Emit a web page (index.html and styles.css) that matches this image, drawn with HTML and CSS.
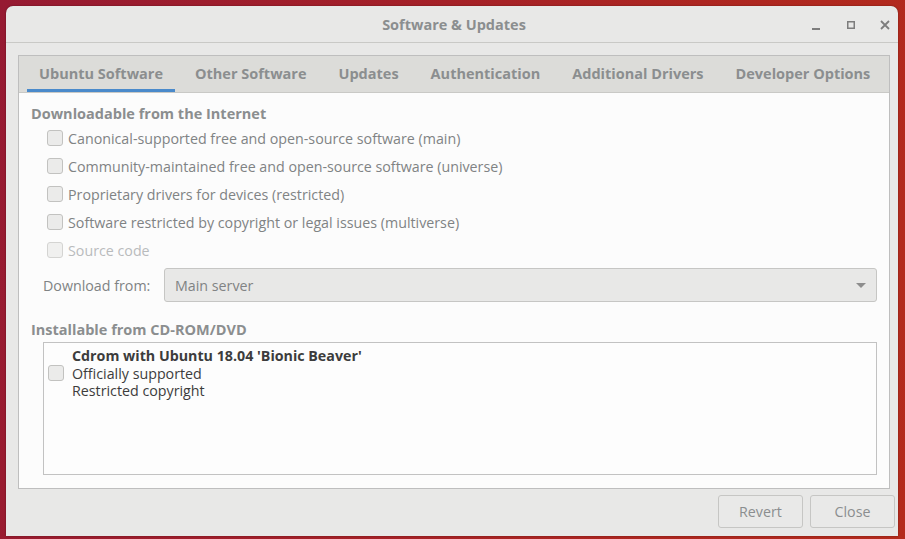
FILE: index.html
```html
<!DOCTYPE html>
<html>
<head>
<meta charset="utf-8">
<link rel="stylesheet" href="styles.css">
</head>
<body>
<div class="window">
  <div class="titlebar">
    <div></div>
    <div class="title">Software &amp; Updates</div>
    <div class="controls">
      <svg width="12" height="12" viewBox="0 0 12 12"><rect x="1" y="9" width="8" height="2" fill="#7d7d7d"/></svg>
      <svg width="12" height="12" viewBox="0 0 12 12"><rect x="2.75" y="2.75" width="6.5" height="6.5" fill="none" stroke="#7d7d7d" stroke-width="1.5"/></svg>
      <svg width="12" height="12" viewBox="0 0 12 12"><path d="M2 2 L10 10 M10 2 L2 10" stroke="#7d7d7d" stroke-width="1.8"/></svg>
    </div>
  </div>
  <div class="body">
    <div class="notebook">
      <div class="tabs">
        <div class="tab active">Ubuntu Software</div>
        <div class="tab">Other Software</div>
        <div class="tab">Updates</div>
        <div class="tab">Authentication</div>
        <div class="tab">Additional Drivers</div>
        <div class="tab">Developer Options</div>
      </div>
      <div class="page">
        <div class="heading">Downloadable from the Internet</div>
        <div class="row"><span class="check"></span><span>Canonical-supported free and open-source software (main)</span></div>
        <div class="row"><span class="check"></span><span>Community-maintained free and open-source software (universe)</span></div>
        <div class="row"><span class="check"></span><span>Proprietary drivers for devices (restricted)</span></div>
        <div class="row"><span class="check"></span><span>Software restricted by copyright or legal issues (multiverse)</span></div>
        <div class="row faint"><span class="check"></span><span>Source code</span></div>
        <div class="download">
          <span class="dl-label">Download from:</span>
          <div class="combo"><span>Main server</span><span class="arrow"></span></div>
        </div>
        <div class="heading second">Installable from CD-ROM/DVD</div>
        <div class="cdbox">
          <div class="cditem">
            <span class="check"></span>
            <div class="cdtext">
              <div class="cdname">Cdrom with Ubuntu 18.04 'Bionic Beaver'</div>
              <div>Officially supported</div>
              <div>Restricted copyright</div>
            </div>
          </div>
        </div>
      </div>
    </div>
    <div class="actions">
      <div class="btn">Revert</div>
      <div class="btn">Close</div>
    </div>
  </div>
</div>
</body>
</html>
```

FILE: styles.css
```css
* { box-sizing: border-box; }
html, body { margin: 0; height: 100%; }
body {
  width: 905px;
  height: 539px;
  overflow: hidden;
  background: linear-gradient(100deg, #961a32 0%, #a21f2a 35%, #ad2621 70%, #b42b1c 100%);
  font-family: "Open Sans", "DejaVu Sans", sans-serif;
  font-size: 14.25px;
  color: #808384;
  padding: 6px 0 0 6px;
}
.window {
  width: 892px;
  height: 530px;
  background: #e8e8e7;
  border-radius: 7px 7px 0 0;
  display: flex;
  flex-direction: column;
  box-shadow: 0 0 2px rgba(0,0,0,0.4);
}
.titlebar {
  height: 37px;
  border-bottom: 1px solid #c9c9c6;
  display: grid;
  grid-template-columns: 1fr auto 1fr;
  align-items: center;
}
.title {
  font-weight: 700;
  font-size: 14.5px;
  color: #8b8e8f;
  padding-left: 4px;
}
.controls {
  display: flex;
  justify-content: flex-end;
  gap: 22px;
  padding-right: 7px;
  padding-top: 1px;
}
.body {
  flex: 1;
  display: flex;
  flex-direction: column;
  padding: 12px 8px 0 12px;
}
.notebook {
  height: 434px;
  border: 1px solid #bebebe;
  background: #fcfcfc;
  display: flex;
  flex-direction: column;
}
.tabs {
  height: 37px;
  background: #dcdcd9;
  border-bottom: 1px solid #c9c9c6;
  display: flex;
  gap: 8px;
  padding-left: 8px;
}
.tab {
  padding: 1px 12px 0 12px;
  display: flex;
  align-items: center;
  font-weight: 700;
  font-size: 14.5px;
  color: #8b8e8f;
  border-bottom: 3px solid transparent;
}
.tab.active { border-bottom-color: #4a8acb; }
.page {
  flex: 1;
  padding: 12px 12px 0 12px;
  display: flex;
  flex-direction: column;
}
.heading {
  height: 18px;
  line-height: 18px;
  font-weight: 700;
  font-size: 14.5px;
  color: #8b8e8f;
}
.heading.second { margin-top: 19px; }
.row {
  height: 28px;
  display: flex;
  align-items: center;
  padding-left: 16px;
  gap: 5px;
}
.heading + .row { margin-top: 1px; }
.check {
  width: 16px;
  height: 16px;
  border: 1px solid #c2c2c0;
  border-radius: 3px;
  background: #ebebea;
  flex: none;
}
.faint { color: #b9bbbc; }
.faint .check { border-color: #d4d4d2; background: #f0f0ef; }
.download {
  margin-top: 4px;
  display: flex;
  align-items: center;
  padding-left: 12px;
}
.dl-label { width: 121px; }
.combo {
  flex: 1;
  height: 34px;
  border: 1px solid #c6c6c4;
  border-radius: 3px;
  background: #e8e8e7;
  display: flex;
  align-items: center;
  justify-content: space-between;
  padding: 0 10px;
}
.arrow {
  width: 0;
  height: 0;
  border-left: 5px solid transparent;
  border-right: 5px solid transparent;
  border-top: 5px solid #8d8d8d;
}
.cdbox {
  margin-top: 3px;
  margin-left: 12px;
  height: 133px;
  border: 1px solid #c2c2c2;
  background: #fdfdfd;
  padding: 4px 4px;
}
.cditem {
  display: flex;
  align-items: center;
  gap: 8px;
}
.cdtext { line-height: 17.5px; color: #3c3c3c; }
.cdname { font-weight: 700; }
.actions {
  display: flex;
  justify-content: flex-end;
  gap: 7px;
  margin-top: 6px;
  margin-right: -5px;
}
.btn {
  width: 85px;
  height: 33px;
  border: 1px solid #c6c6c4;
  border-radius: 3px;
  background: #e9e9e8;
  display: flex;
  align-items: center;
  justify-content: center;
  color: #8b8e8f;
}
```
